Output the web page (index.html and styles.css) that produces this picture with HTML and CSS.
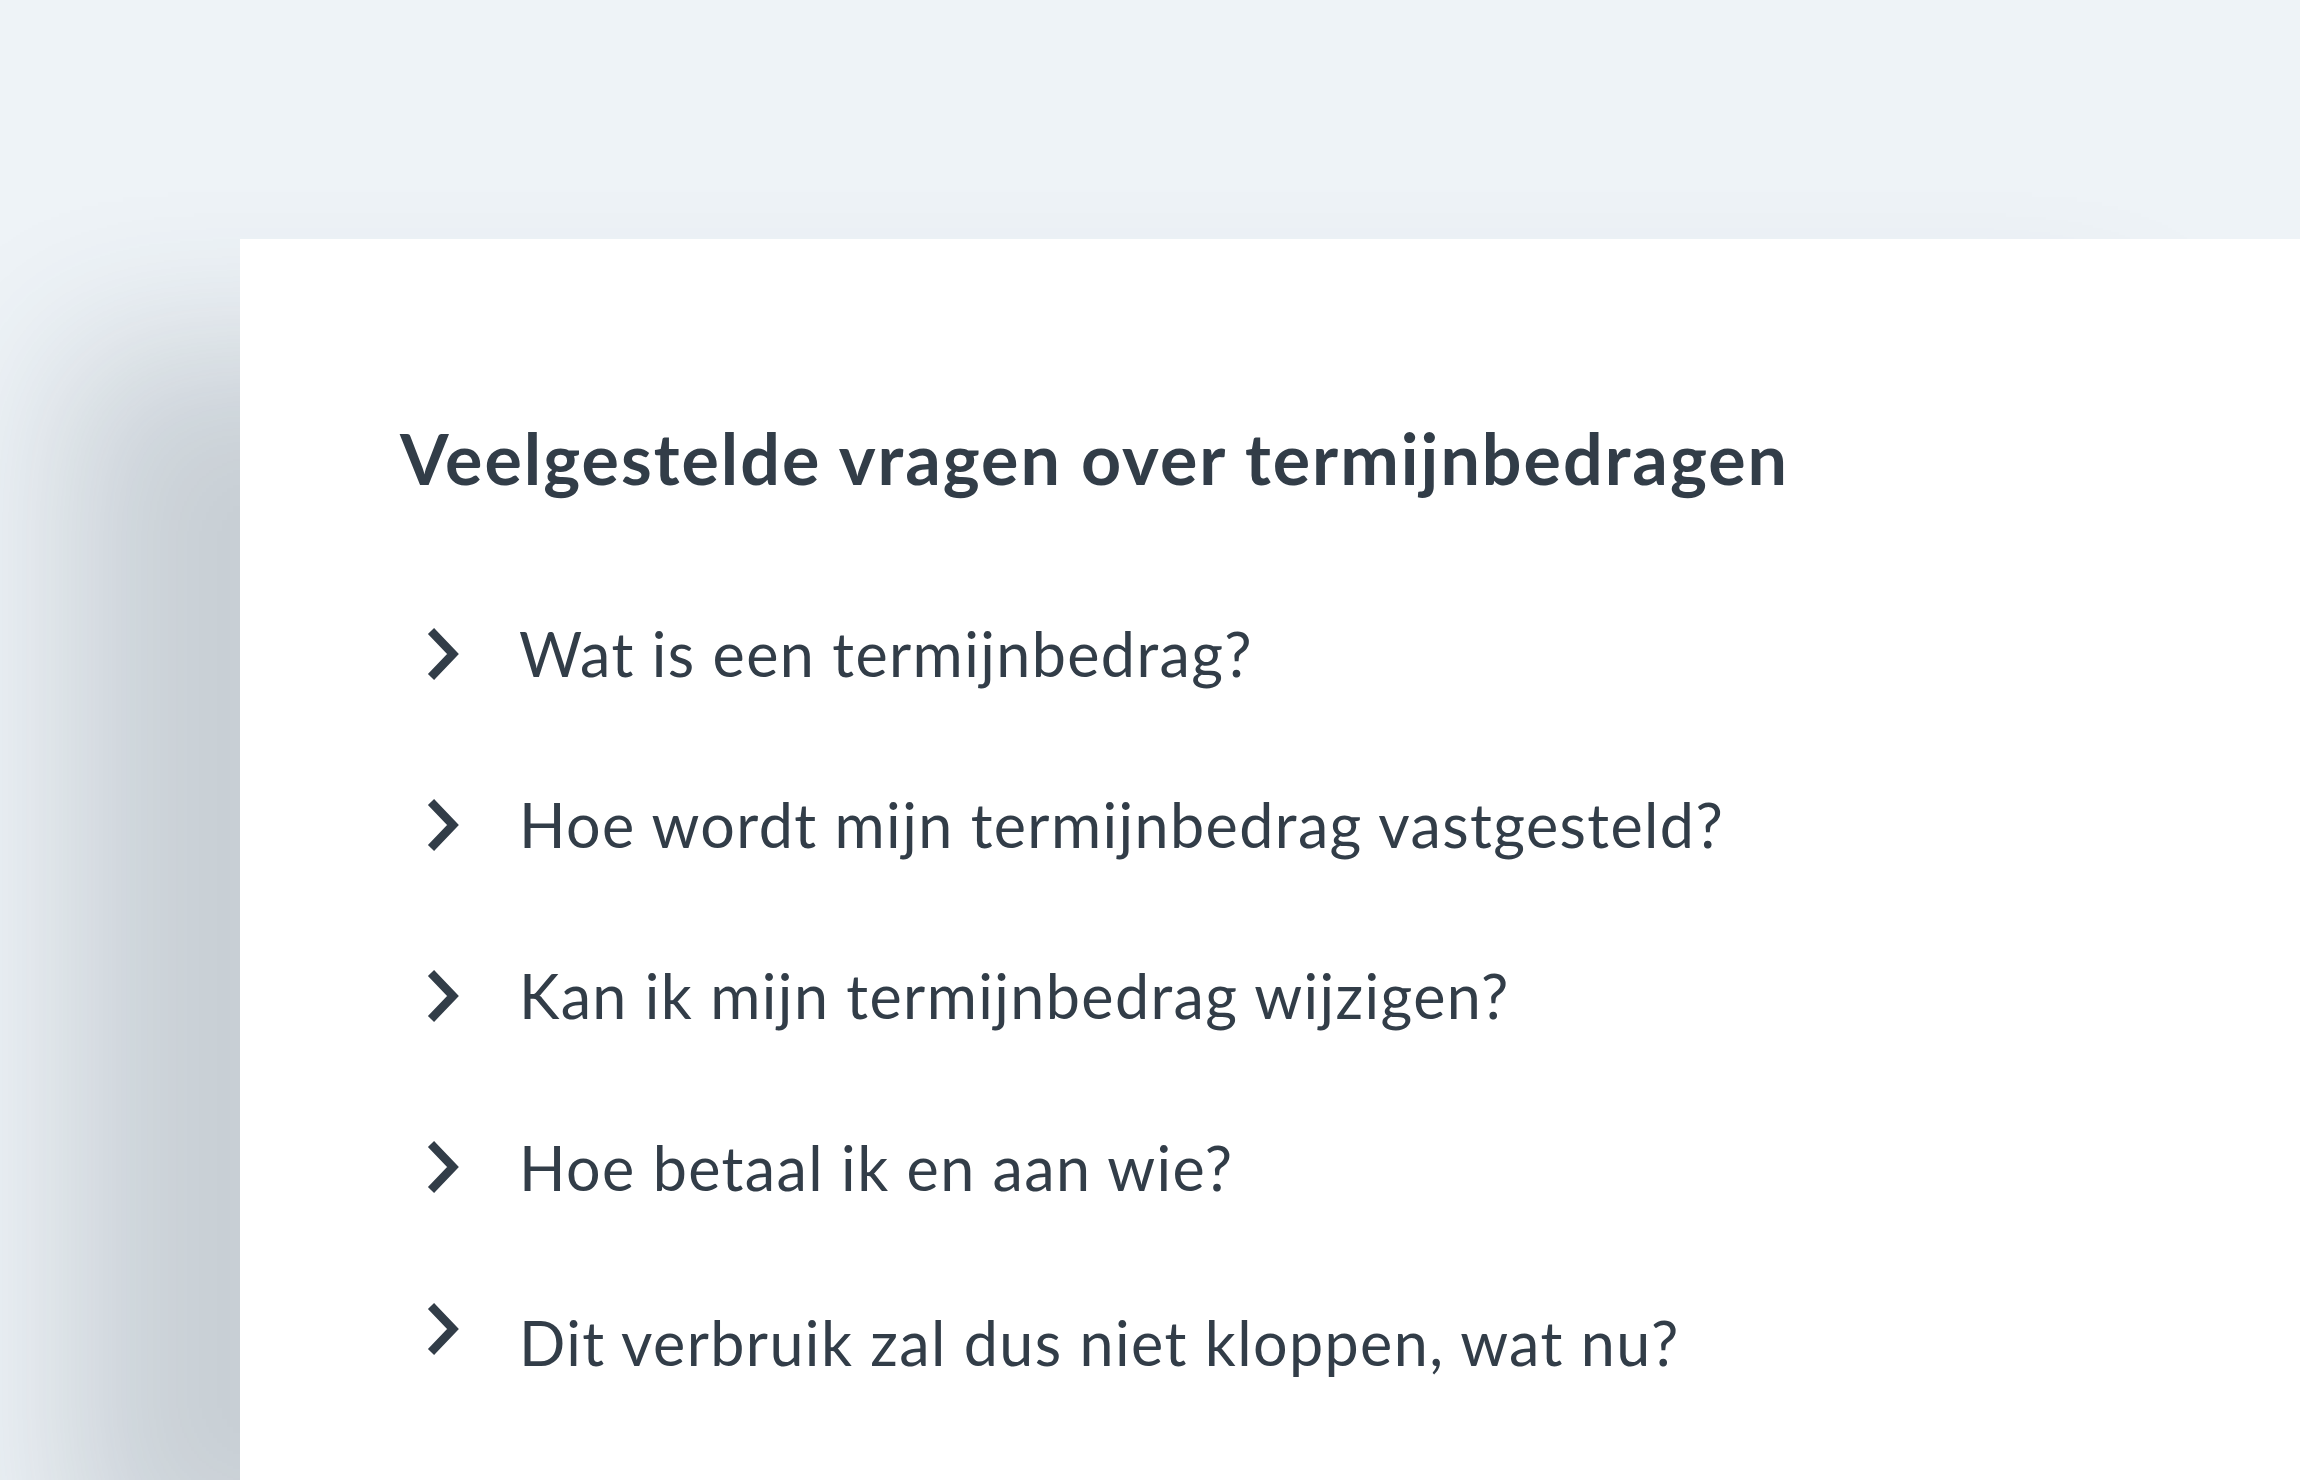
FILE: index.html
```html
<!DOCTYPE html>
<html>
<head>
  <title>Veelgestelde vragen</title>
  <link rel="stylesheet" href="styles.css">
</head>
<body>
  <main class="page">
    <section class="faq-card">
      <h2 class="faq-title">Veelgestelde vragen over termijnbedragen</h2>

      <ul class="faq-list">
        <li class="faq-item">
          <svg class="faq-icon" viewBox="0 0 32 54"><polyline points="4,4 26,27 4,50"/></svg>
          <span class="faq-question">Wat is een termijnbedrag?</span>
        </li>
        <li class="faq-item">
          <svg class="faq-icon" viewBox="0 0 32 54"><polyline points="4,4 26,27 4,50"/></svg>
          <span class="faq-question">Hoe wordt mijn termijnbedrag vastgesteld?</span>
        </li>
        <li class="faq-item">
          <svg class="faq-icon" viewBox="0 0 32 54"><polyline points="4,4 26,27 4,50"/></svg>
          <span class="faq-question">Kan ik mijn termijnbedrag wijzigen?</span>
        </li>
        <li class="faq-item">
          <svg class="faq-icon" viewBox="0 0 32 54"><polyline points="4,4 26,27 4,50"/></svg>
          <span class="faq-question">Hoe betaal ik en aan wie?</span>
        </li>
        <li class="faq-item faq-item--top">
          <svg class="faq-icon" viewBox="0 0 32 54"><polyline points="4,4 26,27 4,50"/></svg>
          <span class="faq-question">Dit verbruik zal dus niet kloppen, wat nu?</span>
        </li>
      </ul>
    </section>
  </main>
</body>
</html>
```

FILE: styles.css
```css
/* Pagina */
body {
  margin: 0;
  background-color: #eef3f7;
  font-family: Lato, "Open Sans", sans-serif;
  color: #323d48;
  overflow: hidden;
}

.page {
  box-sizing: border-box;
  height: 100vh;
  padding: 239px 0 0 240px;
  overflow: hidden;
}

.faq-card {
  box-sizing: border-box;
  height: 100%;
  padding: 177px 0 0 160px;
  background-color: #fff;
  box-shadow: -170px 110px 150px rgba(52, 64, 80, 0.2);
}

.faq-title {
  margin: 0;
  font-size: 70px;
  font-weight: 700;
  line-height: 1.2;
  letter-spacing: 2px;
}

.faq-list {
  list-style: none;
  margin: 117px 0 0;
  padding: 0 0 0 27px;
  display: flex;
  flex-direction: column;
  gap: 98px;
}

.faq-item {
  display: flex;
  align-items: center;
  gap: 60px;
  font-size: 61px;
  line-height: 1.2;
  letter-spacing: 1.4px;
}

.faq-item--top {
  align-items: flex-start;
}

.faq-item--top .faq-question {
  padding-top: 4px;
}

.faq-icon {
  flex: none;
  width: 32px;
  height: 54px;
  fill: none;
  stroke: #323d48;
  stroke-width: 8.5;
  stroke-linejoin: miter;
}
```
